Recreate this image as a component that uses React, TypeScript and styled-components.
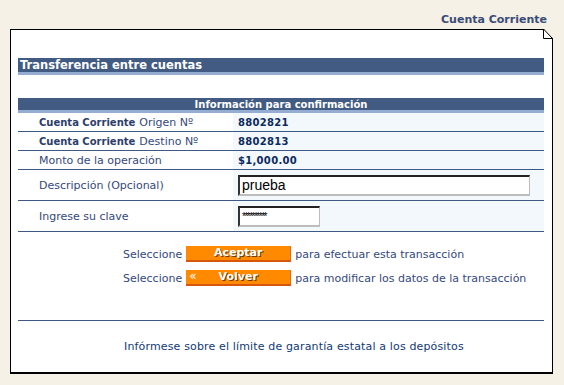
import React from "react";
import styled, { createGlobalStyle } from "styled-components";

const GlobalStyle = createGlobalStyle`
  body {
    margin: 0;
    background: #f5f1e6;
    font-family: "DejaVu Sans", Verdana, sans-serif;
  }
`;

const Page = styled.div`
  width: 543px;
  margin-left: 10px;
  display: flex;
  flex-direction: column;
`;

const SectionName = styled.div`
  height: 29px;
  box-sizing: border-box;
  padding: 13px 6px 0 0;
  text-align: right;
  font-weight: 700;
  font-size: 11px;
  line-height: 14px;
  color: #3a4c77;
`;

const Panel = styled.div`
  position: relative;
  background: #fff;
  border: 1px solid #000;
  border-bottom-width: 2px;
  padding: 28px 8px 0 7px;
  display: flex;
  flex-direction: column;
`;

const DogEar = styled.svg`
  position: absolute;
  top: -1px;
  right: -1px;
`;

const TitleBar = styled.div`
  height: 14px;
  background: #415b82;
  border-bottom: 3px solid #94add0;
  padding-left: 2px;
  color: #fff;
  font-weight: 700;
  font-size: 11.5px;
  line-height: 15px;
`;

const Table = styled.div`
  margin-top: 23px;
  display: grid;
  grid-template-columns: 215px minmax(0, 1fr);
`;

const TableHead = styled.div`
  grid-column: 1 / -1;
  height: 12px;
  background: #415b82;
  border-bottom: 3px solid #94add0;
  text-align: center;
  color: #fff;
  font-weight: 700;
  font-size: 10px;
  line-height: 13px;
`;

const Label = styled.div<{ $h: number }>`
  height: ${(p) => p.$h}px;
  border-bottom: 1px solid #3e5a84;
  padding-left: 21px;
  display: flex;
  align-items: center;
  font-size: 11px;
  color: #34497b;
  b {
    color: #2c3e6b;
    font-size: 10px;
    margin-right: 4px;
  }
`;

const Value = styled.div<{ $h: number }>`
  height: ${(p) => p.$h}px;
  border-bottom: 1px solid #3e5a84;
  background: #f3f8fd;
  padding-left: 5px;
  display: flex;
  align-items: center;
  font-size: 10px;
  font-weight: 700;
  color: #0d2b5c;
  letter-spacing: 0.3px;
`;

const TextField = styled.input<{ $w: number }>`
  box-sizing: border-box;
  width: ${(p) => p.$w}px;
  height: 21px;
  margin: 0;
  padding: 0 2px;
  border-style: solid;
  border-width: 2px 1px 2px 2px;
  border-color: #222 #bdbdbd #bdbdbd #333;
  background: #fff;
  font-family: "Liberation Sans", Arial, sans-serif;
  font-size: 14px;
  color: #000;
  outline: none;
`;

const Secret = styled(TextField)`
  font-size: 10px;
  letter-spacing: -1.5px;
`;

const Actions = styled.div`
  margin-top: 14px;
  padding-left: 105px;
  display: flex;
  flex-direction: column;
  gap: 8px;
`;

const ActionRow = styled.div`
  display: flex;
  align-items: center;
  gap: 4px;
  font-size: 11px;
  color: #34497b;
  white-space: nowrap;
`;

const OrangeButton = styled.button`
  position: relative;
  width: 105px;
  height: 16px;
  padding: 0;
  border: none;
  border-bottom: 2px solid #d8560a;
  border-right: 1px solid #e46a10;
  background: #ff8a00;
  color: #fff;
  font-family: "DejaVu Sans", Verdana, sans-serif;
  font-weight: 700;
  font-size: 11px;
  line-height: 14px;
  text-shadow: 1px 1px 0 #6b3a00;
  cursor: pointer;
`;

const Chevrons = styled.span`
  position: absolute;
  left: 3px;
  top: -1px;
  font-weight: 400;
  font-size: 12px;
  text-shadow: none;
`;

const Divider = styled.div`
  margin-top: 34px;
  border-top: 1px solid #3e5a84;
`;

const Footer = styled.div`
  height: 51px;
  padding-left: 106px;
  display: flex;
  align-items: center;
  font-size: 11px;
  letter-spacing: 0.15px;
  color: #123a76;
`;

const rows: { label: React.ReactNode; value: React.ReactNode; h: number }[] = [
  { label: <><b>Cuenta Corriente</b>Origen Nº</>, value: "8802821", h: 18 },
  { label: <><b>Cuenta Corriente</b>Destino Nº</>, value: "8802813", h: 18 },
  { label: "Monto de la operación", value: "$1,000.00", h: 18 },
  { label: "Descripción (Opcional)", value: <TextField $w={292} defaultValue="prueba" />, h: 30 },
  { label: "Ingrese su clave", value: <Secret $w={82} defaultValue="**********" />, h: 30 },
];

export default function App() {
  return (
    <>
      <GlobalStyle />
      <Page>
        <SectionName>Cuenta Corriente</SectionName>
        <Panel>
          <DogEar width="10" height="10" viewBox="0 0 10 10">
            <polygon points="0.5,0 10,0 10,9.5" fill="#f5f1e6" />
            <polyline points="0.5,0 9.5,9.5 0.5,9.5 0.5,0" fill="#fff" stroke="#000" strokeWidth="1" />
          </DogEar>
          <TitleBar>Transferencia entre cuentas</TitleBar>
          <Table>
            <TableHead>Información para confirmación</TableHead>
            {rows.map((r, i) => (
              <React.Fragment key={i}>
                <Label $h={r.h}>{r.label}</Label>
                <Value $h={r.h}>{r.value}</Value>
              </React.Fragment>
            ))}
          </Table>
          <Actions>
            <ActionRow>
              <span>Seleccione</span>
              <OrangeButton>Aceptar</OrangeButton>
              <span>para efectuar esta transacción</span>
            </ActionRow>
            <ActionRow>
              <span>Seleccione</span>
              <OrangeButton>
                <Chevrons>«</Chevrons>
                Volver
              </OrangeButton>
              <span>para modificar los datos de la transacción</span>
            </ActionRow>
          </Actions>
          <Divider />
          <Footer>Infórmese sobre el límite de garantía estatal a los depósitos</Footer>
        </Panel>
      </Page>
    </>
  );
}
